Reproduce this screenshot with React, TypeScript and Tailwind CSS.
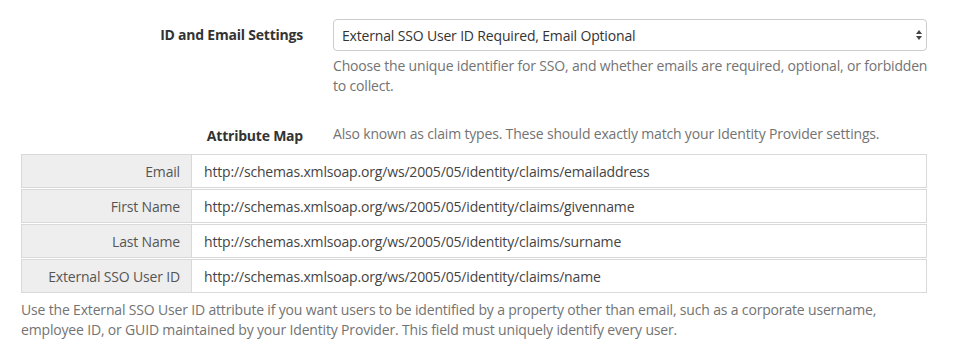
import React from "react";

const rows = [
  ["Email", "http://schemas.xmlsoap.org/ws/2005/05/identity/claims/emailaddress"],
  ["First Name", "http://schemas.xmlsoap.org/ws/2005/05/identity/claims/givenname"],
  ["Last Name", "http://schemas.xmlsoap.org/ws/2005/05/identity/claims/surname"],
  ["External SSO User ID", "http://schemas.xmlsoap.org/ws/2005/05/identity/claims/name"],
];

export default function App() {
  return (
    <div
      className="w-[974px] h-[357px] bg-white text-[14px] text-[#333] overflow-hidden tracking-[-0.17px]"
      style={{ fontFamily: "'Open Sans', 'Noto Sans', sans-serif" }}
    >
      <div className="flex pt-[19px]">
        <div className="w-[318px] pr-[15px] text-right font-bold leading-[32px] tracking-[-0.22px]">
          ID and Email Settings
        </div>
        <div className="w-[596px] ml-[15px]">
          <div className="relative w-[594px] h-[32px] border border-[#ccc] rounded-[4px] pl-[8px] flex items-center text-[#333]">
            External SSO User ID Required, Email Optional
            <svg
              className="absolute right-[3px] top-[9px]"
              width="8"
              height="12"
              viewBox="0 0 8 12"
            >
              <path d="M4 1 L7 5 L1 5 Z" fill="#444" />
              <path d="M4 11 L7 7 L1 7 Z" fill="#444" />
            </svg>
          </div>
          <div className="mt-[5px] leading-[20px] text-[#737373]">
            Choose the unique identifier for SSO, and whether emails are required, optional, or forbidden
            to collect.
          </div>
        </div>
      </div>

      <div className="flex mt-[28px]">
        <div className="w-[318px] pr-[15px] text-right font-bold leading-[20px] pt-[2px] tracking-[-0.22px]">
          Attribute Map
        </div>
        <div className="ml-[15px] leading-[20px] text-[#737373]">
          Also known as claim types. These should exactly match your Identity Provider settings.
        </div>
      </div>

      <div className="ml-[21px] w-[906px] mt-[8px] flex flex-col gap-[1px]">
        {rows.map(([label, value]) => (
          <div key={label} className="flex h-[34px] border border-[#d9d9d9]">
            <div className="w-[170px] bg-[#eeeeee] border-r border-[#d9d9d9] text-right pr-[11px] flex items-center justify-end text-[#555]">
              {label}
            </div>
            <div className="flex-1 flex items-center pl-[12px] text-[#444]">{value}</div>
          </div>
        ))}
      </div>

      <div className="ml-[21px] w-[906px] mt-[7px] leading-[20px] text-[#737373]">
        Use the External SSO User ID attribute if you want users to be identified by a property other than email, such as a corporate username,
        employee ID, or GUID maintained by your Identity Provider. This field must uniquely identify every user.
      </div>
    </div>
  );
}
